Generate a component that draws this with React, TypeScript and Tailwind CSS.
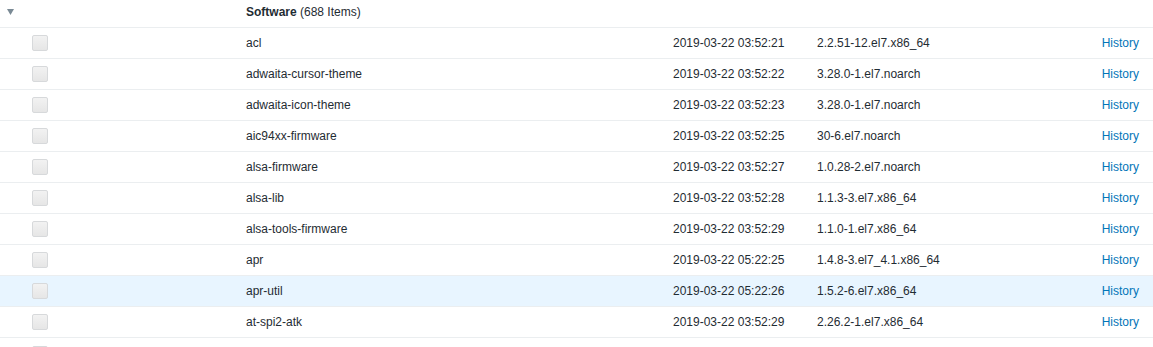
const rows = [
  { name: "acl", date: "2019-03-22 03:52:21", version: "2.2.51-12.el7.x86_64" },
  { name: "adwaita-cursor-theme", date: "2019-03-22 03:52:22", version: "3.28.0-1.el7.noarch" },
  { name: "adwaita-icon-theme", date: "2019-03-22 03:52:23", version: "3.28.0-1.el7.noarch" },
  { name: "aic94xx-firmware", date: "2019-03-22 03:52:25", version: "30-6.el7.noarch" },
  { name: "alsa-firmware", date: "2019-03-22 03:52:27", version: "1.0.28-2.el7.noarch" },
  { name: "alsa-lib", date: "2019-03-22 03:52:28", version: "1.1.3-3.el7.x86_64" },
  { name: "alsa-tools-firmware", date: "2019-03-22 03:52:29", version: "1.1.0-1.el7.x86_64" },
  { name: "apr", date: "2019-03-22 05:22:25", version: "1.4.8-3.el7_4.1.x86_64" },
  { name: "apr-util", date: "2019-03-22 05:22:26", version: "1.5.2-6.el7.x86_64", hover: true },
  { name: "at-spi2-atk", date: "2019-03-22 03:52:29", version: "2.26.2-1.el7.x86_64" },
];

const Checkbox = () => (
  <span className="block w-4 h-4 rounded-[2px] border border-[#d7d9db] bg-gradient-to-b from-[#f2f2f2] to-[#e6e6e6]"></span>
);

export default function App() {
  return (
    <div className="w-[1153px] h-[347px] overflow-hidden bg-white text-[12px] text-[#1f2c33] font-['Liberation_Sans',Arial,sans-serif]">
      <div className="flex items-center h-[28px] border-b border-[#ebeef0]">
        <div className="w-[246px] pl-[7px] pb-[4px]">
          <svg width="7" height="6" viewBox="0 0 7 6" className="block">
            <polygon points="0,0 7,0 3.5,6" fill="#7a8a95" />
          </svg>
        </div>
        <div className="pb-[4px]">
          <span className="font-bold">Software</span> (688 Items)
        </div>
      </div>

      {rows.map((r) => (
        <div
          key={r.name}
          className={`flex items-center h-[31px] border-b border-[#ebeef0] ${r.hover ? "bg-[#e8f5ff]" : ""}`}
        >
          <div className="w-[246px] pl-[32px]">
            <Checkbox />
          </div>
          <div className="w-[427px]">{r.name}</div>
          <div className="w-[144px]">{r.date}</div>
          <div className="flex-1">{r.version}</div>
          <div className="pr-[14px] text-[#0275b8]">History</div>
        </div>
      ))}

      {/* next row, only its checkbox peeks in at the bottom edge */}
      <div className="flex items-center h-[31px]">
        <div className="w-[246px] pl-[32px]">
          <Checkbox />
        </div>
      </div>
    </div>
  );
}
